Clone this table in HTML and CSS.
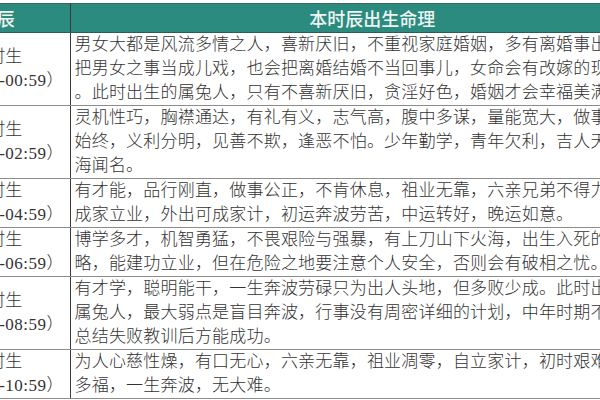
FILE: index.html
```html
<!DOCTYPE html>
<html lang="zh-CN">
<head>
<meta charset="utf-8">
<title>出生时辰命理</title>
<link rel="stylesheet" href="styles.css">
</head>
<body>
<table class="sheet">
  <colgroup>
    <col class="col-time">
    <col class="col-text">
  </colgroup>
  <thead>
    <tr>
      <th class="time">时辰</th>
      <th>本时辰出生命理</th>
    </tr>
  </thead>
  <tbody>
    <tr>
      <td class="time">子时生<br><span class="hours">（23:00-00:59）</span></td>
      <td>男女大都是风流多情之人，喜新厌旧，不重视家庭婚姻，多有离婚事出现，<br>把男女之事当成儿戏，也会把离婚结婚不当回事儿，女命会有改嫁的现象<br>。此时出生的属兔人，只有不喜新厌旧，贪淫好色，婚姻才会幸福美满。</td>
    </tr>
    <tr>
      <td class="time">丑时生<br><span class="hours">（01:00-02:59）</span></td>
      <td>灵机性巧，胸襟通达，有礼有义，志气高，腹中多谋，量能宽大，做事有始有<br>始终，义利分明，见善不欺，逢恶不怕。少年勤学，青年欠利，吉人天相，四<br>海闻名。</td>
    </tr>
    <tr>
      <td class="time">寅时生<br><span class="hours">（03:00-04:59）</span></td>
      <td>有才能，品行刚直，做事公正，不肯休息，祖业无靠，六亲兄弟不得力，<br>成家立业，外出可成家计，初运奔波劳苦，中运转好，晚运如意。</td>
    </tr>
    <tr>
      <td class="time">卯时生<br><span class="hours">（05:00-06:59）</span></td>
      <td>博学多才，机智勇猛，不畏艰险与强暴，有上刀山下火海，出生入死的胆<br>略，能建功立业，但在危险之地要注意个人安全，否则会有破相之忧。</td>
    </tr>
    <tr>
      <td class="time">辰时生<br><span class="hours">（07:00-08:59）</span></td>
      <td>有才学，聪明能干，一生奔波劳碌只为出人头地，但多败少成。此时出生的<br>属兔人，最大弱点是盲目奔波，行事没有周密详细的计划，中年时期不善<br>总结失败教训后方能成功。</td>
    </tr>
    <tr>
      <td class="time">巳时生<br><span class="hours">（09:00-10:59）</span></td>
      <td>为人心慈性燥，有口无心，六亲无靠，祖业凋零，自立家计，初时艰难，晚年<br>多福，一生奔波，无大难。</td>
    </tr>
  </tbody>
</table>
</body>
</html>
```
FILE: styles.css
```css
html, body {
  margin: 0;
  padding: 0;
  background: #ffffff;
  overflow: hidden;
}

.sheet {
  margin: 3px 0 0 -76px;
  border-collapse: collapse;
  table-layout: fixed;
  width: 750px;
}

.col-time { width: 146px; }
.col-text { width: 604px; }

.sheet th {
  height: 28px;
  padding: 0;
  background: #2b8b7f;
  color: #eef5f3;
  font-family: "Noto Sans CJK SC", sans-serif;
  font-size: 18px;
  font-weight: 500;
  line-height: 28px;
  text-align: center;
  border-top: 1px solid #3a6a62;
  border-bottom: 1px solid #2d5c55;
}

.sheet td {
  padding: 0 4px;
  font-family: "Liberation Serif", "Noto Sans CJK SC", serif;
  font-size: 17px;
  font-weight: 300;
  line-height: 24px;
  letter-spacing: 0.2px;
  color: #333333;
  white-space: nowrap;
  vertical-align: middle;
  text-align: left;
  border-bottom: 1px solid #8c8c8c;
}

.sheet .time {
  text-align: center;
  letter-spacing: 0;
  border-right: 1px solid #3c3c3c;
}

.hours {
  padding-left: 11px;
  letter-spacing: 0.5px;
}
```
